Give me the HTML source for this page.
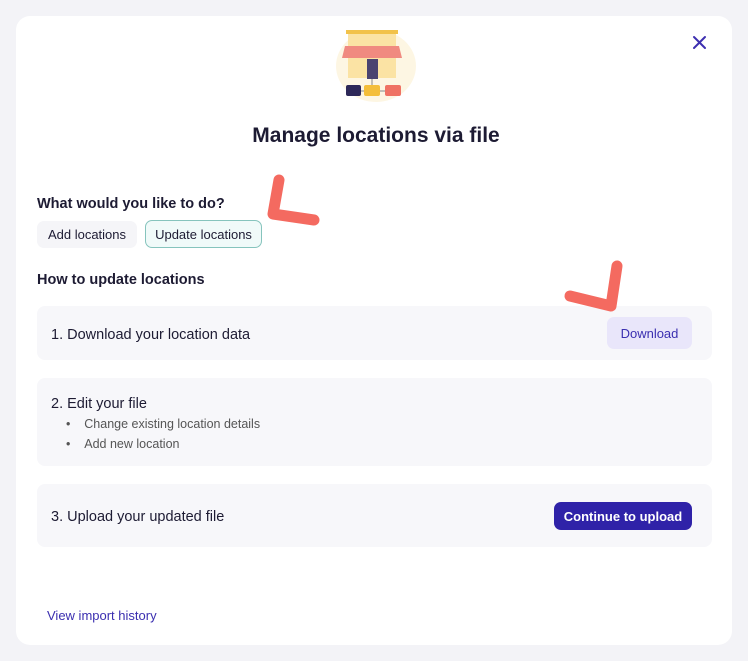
<!DOCTYPE html>
<html><head><style>
body{margin:0;width:748px;height:661px;background:#f3f3f7;font-family:"Liberation Sans",sans-serif;position:relative;overflow:hidden;color:#1d1b33}
.card{position:absolute;left:16px;top:16px;width:716px;height:629px;background:#fff;border-radius:14px}
.a{position:absolute}
.panel{position:absolute;left:37px;width:675px;background:#f7f7fa;border-radius:8px}
.btn{position:absolute;border-radius:7px;font-size:13px;display:flex;align-items:center;justify-content:center}
</style></head><body>
<div class="card"></div>
<svg class="a" style="left:330px;top:24px" width="90" height="80" viewBox="0 0 90 80">
<ellipse cx="46" cy="42" rx="40" ry="36" fill="#fdf6e3"/>
<rect x="16" y="6" width="52" height="4" fill="#f2c24a"/>
<rect x="18" y="10" width="48" height="12" fill="#fbe3a4"/>
<path d="M15 22h54l3 12H12z" fill="#f08a80"/>
<rect x="18" y="34" width="48" height="20" fill="#fbe3a4"/>
<rect x="37" y="35" width="11" height="20" fill="#4a4370"/>
<line x1="42" y1="55" x2="42" y2="66" stroke="#888" stroke-width="1"/>
<line x1="28" y1="67" x2="62" y2="67" stroke="#888" stroke-width="1"/>
<rect x="16" y="61" width="15" height="11" rx="2" fill="#2d2858"/>
<rect x="34" y="61" width="16" height="11" rx="2" fill="#f4be3a"/>
<rect x="55" y="61" width="16" height="11" rx="2" fill="#ef7264"/>
</svg>
<svg class="a" style="left:692px;top:35px" width="15" height="15" viewBox="0 0 15 15"><path d="M2 2L13 13M13 2L2 13" stroke="#3d2fb0" stroke-width="2" stroke-linecap="round"/></svg>
<div class="a" style="left:2px;width:748px;top:124px;text-align:center;font-size:21px;font-weight:bold">Manage locations via file</div>
<div class="a" style="left:37px;top:196px;font-size:14.5px;font-weight:bold">What would you like to do?</div>
<div class="btn" style="left:37px;top:221px;width:100px;height:27px;background:#f5f5f8">Add locations</div>
<div class="btn" style="left:145px;top:220px;width:115px;height:26px;background:#f0faf9;border:1.5px solid #86c4bd">Update locations</div>
<div class="a" style="left:37px;top:272px;font-size:14.5px;font-weight:bold">How to update locations</div>
<div class="panel" style="top:306px;height:54px"></div>
<div class="a" style="left:51px;top:327px;font-size:14.5px">1. Download your location data</div>
<div class="btn" style="left:607px;top:317px;width:85px;height:32px;background:#e9e6fa;color:#3b2fb0">Download</div>
<div class="panel" style="top:378px;height:88px"></div>
<div class="a" style="left:51px;top:396px;font-size:14.5px">2. Edit your file</div>
<div class="a" style="left:66px;top:414px;font-size:12.5px;color:#555;line-height:20px">•&nbsp;&nbsp;&nbsp;&nbsp;Change existing location details<br>•&nbsp;&nbsp;&nbsp;&nbsp;Add new location</div>
<div class="panel" style="top:484px;height:63px"></div>
<div class="a" style="left:51px;top:509px;font-size:14.5px">3. Upload your updated file</div>
<div class="btn" style="left:554px;top:502px;width:138px;height:28px;background:#2f22a8;color:#fff;font-weight:bold">Continue to upload</div>
<div class="a" style="left:47px;top:608px;font-size:13px;color:#3b2fb0">View import history</div>
<svg class="a" style="left:0;top:0" width="748" height="661"><path d="M279 180L273 214L314 220" fill="none" stroke="#f46a60" stroke-width="11" stroke-linecap="round" stroke-linejoin="round"/>
<path d="M617 266L611 306L570 296" fill="none" stroke="#f46a60" stroke-width="11" stroke-linecap="round" stroke-linejoin="round"/></svg>
</body></html>
